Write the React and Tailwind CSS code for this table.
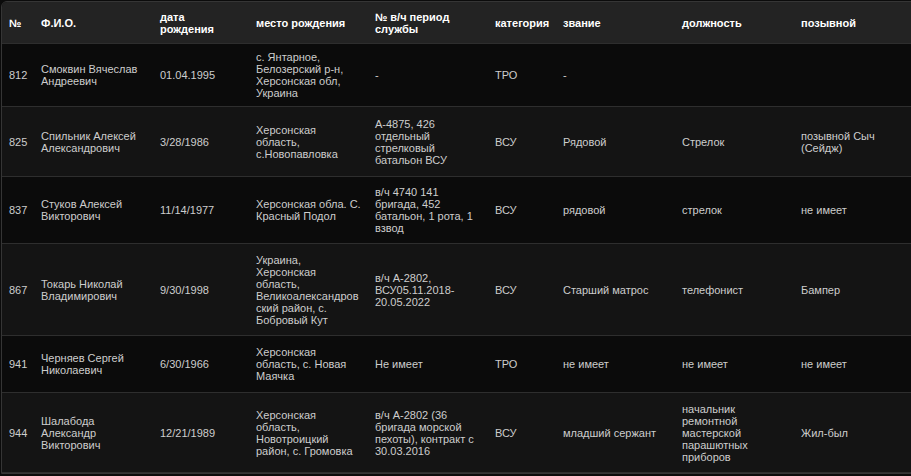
import React from "react";

const cols = "grid grid-cols-[30px_119px_96px_119px_120px_68px_119px_119px_130px] items-center";

const rows = [
  { h: "h-[63px]", bg: "bg-[#0b0b0b]", c: ["812", "Смоквин Вячеслав Андреевич", "01.04.1995", "с. Янтарное, Белозерский р-н, Херсонская обл, Украина", "-", "ТРО", "-", "", ""] },
  { h: "h-[70px]", bg: "bg-[#141414]", c: ["825", "Спильник Алексей Александрович", "3/28/1986", "Херсонская область, с.Новопавловка", "A-4875, 426 отдельный стрелковый батальон ВСУ", "ВСУ", "Рядовой", "Стрелок", "позывной Сыч (Сейдж)"] },
  { h: "h-[67px]", bg: "bg-[#0b0b0b]", c: ["837", "Стуков Алексей Викторович", "11/14/1977", "Херсонская обла. С. Красный Подол", "в/ч 4740 141 бригада, 452 батальон, 1 рота, 1 взвод", "ВСУ", "рядовой", "стрелок", "не имеет"] },
  { h: "h-[92px]", bg: "bg-[#141414]", c: ["867", "Токарь Николай Владимирович", "9/30/1998", "Украина, Херсонская область, Великоалександровский район, с. Бобровый Кут", "в/ч A-2802, ВСУ05.11.2018-20.05.2022", "ВСУ", "Старший матрос", "телефонист", "Бампер"] },
  { h: "h-[57px]", bg: "bg-[#0b0b0b]", c: ["941", "Черняев Сергей Николаевич", "6/30/1966", "Херсонская область, с. Новая Маячка", "Не имеет", "ТРО", "не имеет", "не имеет", "не имеет"] },
  { h: "h-[80px]", bg: "bg-[#141414]", c: ["944", "Шалабода Александр Викторович", "12/21/1989", "Херсонская область, Новотроицкий район, с. Громовка", "в/ч A-2802 (36 бригада морской пехоты), контракт с 30.03.2016", "ВСУ", "младший сержант", "начальник ремонтной мастерской парашютных приборов", "Жил-был"] },
];

const headers = [
  "№",
  "Ф.И.О.",
  <>дата<br />рождения</>,
  "место рождения",
  <>№ в/ч период<br />службы</>,
  "категория",
  "звание",
  "должность",
  "позывной",
];

export default function App() {
  return (
    <div className="w-[911px] h-[476px] overflow-hidden bg-[#0b0b0b] pt-[1px] pl-[1px] font-['Liberation_Sans',Arial,sans-serif] text-[11px] leading-[12px]">
      <div className="w-[930px] border border-[#353535] rounded-t-[6px] overflow-hidden">
        <div className={`${cols} h-[42px] bg-[#232323] border-b border-[#2e2e2e] text-white font-bold`}>
          {headers.map((h, i) => (
            <div key={i} className={`${i === 0 ? "pl-[7px]" : "pl-[9px]"} pr-[4px] whitespace-nowrap`}>{h}</div>
          ))}
        </div>
        {rows.map((r, ri) => (
          <div key={ri} className={`${cols} ${r.h} ${r.bg} border-b border-[#2e2e2e] text-[#cdcdcd]`}>
            {r.c.map((t, i) => (
              <div key={i} className={`${i === 0 ? "pl-[7px]" : "pl-[9px]"} pr-[4px] break-words`}>{t}</div>
            ))}
          </div>
        ))}
      </div>
    </div>
  );
}
